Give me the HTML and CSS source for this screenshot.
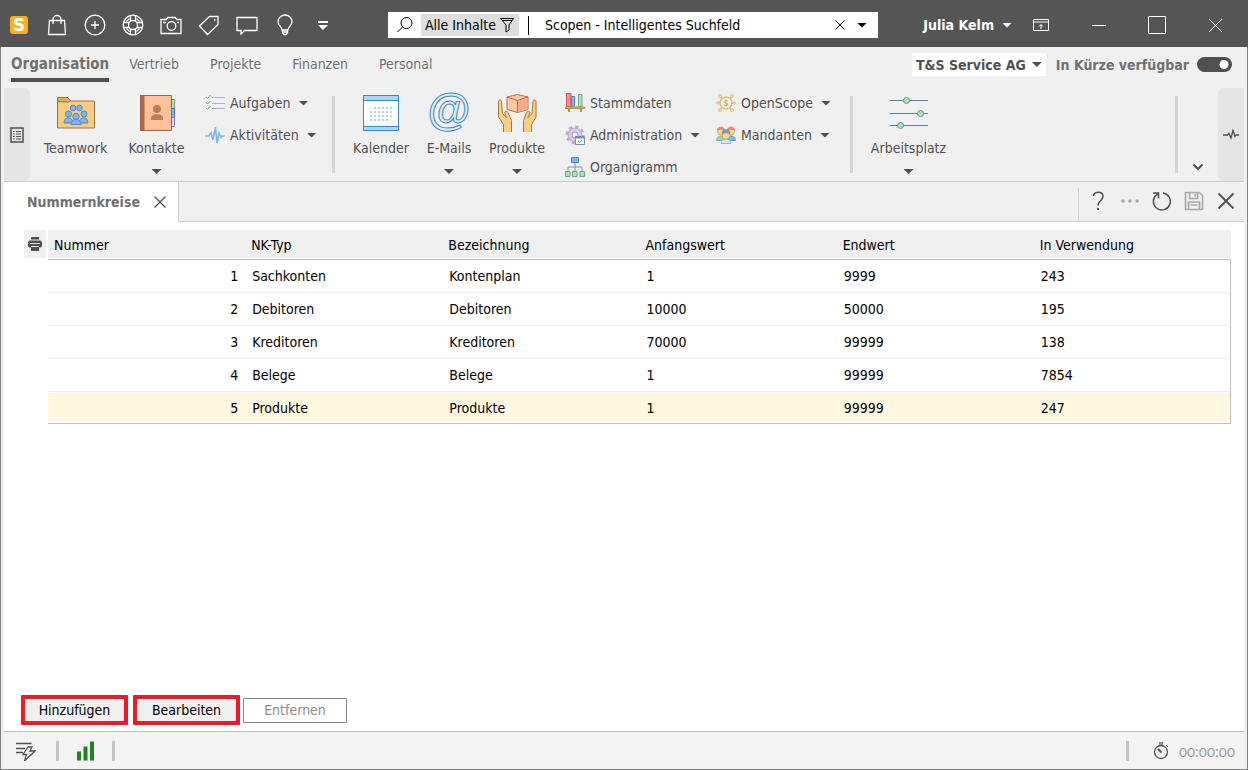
FILE: index.html
```html
<!DOCTYPE html>
<html lang="de">
<head>
<meta charset="utf-8">
<title>Nummernkreise</title>
<link rel="stylesheet" href="styles.css">
</head>
<body>
<div class="window">
  <header class="titlebar">
    <div class="quick">
      <button class="quick-btn" aria-label="Start"><span class="logo">S</span></button>
      <button class="quick-btn" aria-label="Shop"><svg class="i24" viewBox="0 0 24 24"><path d="M4.500 7.500h15l1 14h-17zM8 11V6.500a4 4 0 0 1 8 0V11"/></svg></button>
      <button class="quick-btn" aria-label="Neu"><svg class="i24" viewBox="0 0 24 24"><circle cx="12" cy="12" r="9.800"/><path d="M12 8v8M8 12h8"/></svg></button>
      <button class="quick-btn" aria-label="Hilfe"><svg class="i24" viewBox="0 0 24 24"><circle cx="12" cy="12" r="9.800"/><circle cx="12" cy="12" r="4.500"/><path d="M9.500 2.500v5.500M14.500 2.500v5.500M9.500 16v5.500M14.500 16v5.500M2.500 9.500H8M2.500 14.500H8M16 9.500h5.500M16 14.500h5.500"/><path d="M5.500 8.500l3-3M15.500 5.500l3 3M5.500 15.500l3 3M15.500 18.500l3-3"/></svg></button>
      <button class="quick-btn" aria-label="Kamera"><svg class="i24" viewBox="0 0 24 24"><path d="M2 6.500h5l2-2h7l2 2h4v14H2z"/><circle cx="12.500" cy="13" r="4.300"/><path d="M4 9.500h3M18 9.500h2"/></svg></button>
      <button class="quick-btn" aria-label="Etikett"><svg class="i24" viewBox="0 0 24 24"><path d="M12.500 3.500H21v8l-10.500 10L2.500 13z"/><path d="M17 7h1.500"/></svg></button>
      <button class="quick-btn" aria-label="Nachricht"><svg class="i24" viewBox="0 0 24 24"><path d="M2 4.500h20v13H9.500L6 21v-3.500H2z"/></svg></button>
      <button class="quick-btn" aria-label="Idee"><svg class="i24" viewBox="0 0 24 24"><path d="M9 17c0-3-4-4.500-4-8.500a7 6.500 0 0 1 14 0c0 4-4 5.500-4 8.500zM9 19h6M9.500 17v3l1.500 1.500h2l1.500-1.500v-3"/></svg></button>
      <button class="quick-btn" aria-label="Mehr"><svg class="i24" viewBox="0 0 24 24"><path d="M7 9h10" stroke-width="2"/><path class="solid" d="M7 12h10l-5 5z"/></svg></button>
    </div>
    <div class="search" role="search">
      <svg class="search-icon" viewBox="0 0 18 18"><circle cx="10.500" cy="7" r="5.500"/><path d="M6.500 11L1.500 16"/></svg>
      <button class="filter">Alle Inhalte<svg viewBox="0 0 16 16"><path d="M1.500 1.500h13L10 8v5l-3 2V8z"/><path d="M3 3.500h10"/></svg></button>
      <span class="search-rule"></span>
      <input class="search-input" type="text" aria-label="Suche" value="Scopen - Intelligentes Suchfeld">
      <button class="clear" aria-label="Leeren"><svg viewBox="0 0 12 12"><path d="M1.500 1.500l9 9M10.500 1.500l-9 9"/></svg></button>
      <button class="clear" aria-label="Verlauf"><span class="caret caret-black"></span></button>
    </div>
    <div class="account">
      <button class="user">Julia Kelm<span class="caret caret-white"></span></button>
      <button class="pin" aria-label="Menüband"><svg viewBox="0 0 16 12"><path d="M.500.500h15v11H.500zM.500 3h15M8 10V6M6 7.500l2-2 2 2"/></svg></button>
      <button class="win-btn" aria-label="Minimieren"><svg viewBox="0 0 20 20"><path d="M3 10.500h14"/></svg></button>
      <button class="win-btn" aria-label="Maximieren"><svg viewBox="0 0 20 20"><path d="M1.500 1.500h17v17h-17z"/></svg></button>
      <button class="win-btn" aria-label="Schließen"><svg viewBox="0 0 20 20"><path d="M4 4l13 13M17 4L4 17"/></svg></button>
    </div>
  </header>

  <div class="frame">
    <nav class="menu">
      <a class="menu-link active" href="#">Organisation</a>
      <a class="menu-link" href="#">Vertrieb</a>
      <a class="menu-link" href="#">Projekte</a>
      <a class="menu-link" href="#">Finanzen</a>
      <a class="menu-link" href="#">Personal</a>
      <div class="company">
        <button class="company-select">T&amp;S Service AG<span class="caret"></span></button>
        <label class="soon" for="soon">In Kürze verfügbar</label>
        <input class="switch" id="soon" type="checkbox" role="switch" checked>
      </div>
    </nav>

    <div class="ribbon">
      <button class="handle handle-left" aria-label="Liste"><svg viewBox="0 0 16 18"><path d="M2 2h12v14H2z" stroke-width="1.500"/><path d="M4 5.500h1.500M7 5.500h5M4 8h1.500M7 8h5M4 10.500h1.500M7 10.500h5M4 13h1.500M7 13h5"/></svg></button>
      <div class="group group-first">
        <button class="big">
          <svg class="i40" viewBox="0 0 40 40"><path d="M1.500 9V4.500h10l3 3.500h24v27h-37z" fill="#f6cd7e" stroke="#97763f"/><path d="M1.500 8.500v-4h10l3 3-2 1.500z" fill="#d9ad60" stroke="#97763f"/><g fill="#82b4ee" stroke="#5587c2"><circle cx="17" cy="15" r="2.800"/><circle cx="23.500" cy="15" r="2.800"/><circle cx="12.500" cy="21" r="3"/><path d="M8 30c0-7 8.500-7 9 0z"/><circle cx="28" cy="21" r="3"/><path d="M23 30c.500-7 9-7 9 0z"/><circle cx="20" cy="23.500" r="3.200"/><path d="M15 31.500c0-7 10-7 10 0z"/></g></svg>
          <span>Teamwork</span>
        </button>
        <button class="big">
          <svg class="i40" viewBox="0 0 40 40"><g stroke-width="1"><path d="M34 6.500h3.500v9H34z" fill="#b5dfba" stroke="#5fa779"/><path d="M34 15.500h3.500v9H34z" fill="#82b4ee" stroke="#3d78c0"/><path d="M34 24.500h3.500v9H34z" fill="#e0d3ef" stroke="#927bb0"/></g><path d="M3.500 2.500h31v35h-31z" fill="#ffc19a" stroke="#a26345"/><path d="M3.500 2.500H7v35H3.500z" fill="#a96c4d" stroke="#a26345"/><g fill="#c07a55" stroke="none"><circle cx="20" cy="16" r="4"/><path d="M14 27v-2c0-5 12-5 12 0v2z"/></g></svg>
          <span>Kontakte</span><span class="caret"></span>
        </button>
        <div class="stack stack-a">
          <button class="small"><svg class="i20" viewBox="0 0 20 20"><path d="M7 4.500h13M7 10.500h13M7 15.500h13" stroke="#a7b3c6"/><path d="M1 4l1.500 1.500L5.500 2M1 9.500L2.500 11 5.500 8M1 15l1.500 1.500L5.500 13" stroke="#62a97a"/></svg>Aufgaben<span class="caret"></span></button>
          <button class="small"><svg class="i20" viewBox="0 0 20 20"><path d="M0 11h4l2-3 2 7 2.500-13 1.500 16 2-10 2 4.500 1-1.500h3" stroke="#82b7e5" stroke-width="1.600"/></svg>Aktivitäten<span class="caret"></span></button>
        </div>
      </div>
      <span class="rule"></span>
      <div class="group group-second">
        <button class="big mid">
          <svg class="i40" viewBox="0 0 40 40"><path d="M2.500 2.500h35v35h-35z" fill="#fff" stroke="#3d87c9"/><path d="M3 3h34v4H3zM3 34h34v3H3z" fill="#aad6fa" stroke="none"/><path d="M3 7.500h34M3 33.500h34M2.500 2.500h35v35h-35z" stroke="#3d87c9"/><path d="M13 15h18" stroke="#aad6fa" stroke-width="2" stroke-dasharray="2 2"/><path d="M9 19h22M9 23h22M9 27h18" stroke="#aad6fa" stroke-width="2" stroke-dasharray="2 2"/></svg>
          <span>Kalender</span>
        </button>
        <button class="big mid">
          <svg class="i40 at-icon" viewBox="0 0 40 40"><text class="at" x="20" y="32" text-anchor="middle">@</text></svg>
          <span>E-Mails</span><span class="caret"></span>
        </button>
        <button class="big mid">
          <svg class="i40" viewBox="0 0 40 40"><path d="M10 4l10.500-2.500L31 4v12.500l-10.500 3-10.500-3z" fill="#ffc8a4" stroke="#ad7151"/><path d="M10 4l10.500 3.500L31 4M20.500 7.500v12" stroke="#ad7151"/><path d="M21 8l9.500-3v11.500L21 19z" fill="#f6ad85" stroke="none"/><g fill="#f7cf80" stroke="#9b7c45"><path d="M6.500 39v-7.500L1.500 24V8.500c0-2 3-2 3 0l1 12 4 4-2-5c1-2 3-1 3.500 0l3.500 8V39"/><path d="M34.500 39v-7.500l4.500-7.500V8.500c0-2-3-2-3 0l-1 12-4 4 2-5c-1-2-3-1-3.500 0l-3 8V39"/></g></svg>
          <span>Produkte</span><span class="caret"></span>
        </button>
        <div class="stack stack-b">
          <button class="small"><svg class="i20" viewBox="0 0 20 20"><path d="M1.500.500h4.500v13H1.500z" fill="#f28b8b" stroke="#d45a5f"/><path d="M6.500 3.500h3v10h-3z" fill="#82b4ee" stroke="#4b82c4"/><path d="M13.500 1.500H17v12h-3.500z" fill="#b5dfba" stroke="#65ab80"/><path d="M.500 14h19v1.500H.500z" fill="#f0c070" stroke="#c28c43"/><path d="M4 16v3M16 16v3" stroke="#c28c43" stroke-width="2"/></svg>Stammdaten</button>
          <button class="small"><svg class="i20" viewBox="0 0 20 20"><circle cx="10" cy="10" r="8" stroke="#b9acd6" stroke-width="3" stroke-dasharray="3.200 3.083"/><circle cx="10" cy="10" r="7" fill="#d5ccea" stroke="#b3a5d1"/><circle cx="10" cy="10" r="3" fill="#f0f0f0" stroke="#aa9ac9"/><path d="M10.500 11.500h9v8h-9z" fill="#fff" stroke="#7692aa"/><path d="M11 12.500h8" stroke="#7692aa" stroke-width="2"/><path d="M13 16l1.500 1.500L17 15" stroke="#4d9d70"/></svg>Administration<span class="caret"></span></button>
          <button class="small"><svg class="i20" viewBox="0 0 20 20"><path d="M3 14v-4h14v4M10 6v8" stroke="#8993a5"/><path d="M6.500.500h7v5h-7z" fill="#82b4ee" stroke="#4f86cb"/><path d="M.500 14.500H5v5H.500zM7.500 14.500H12v5H7.500zM15 14.500h4.500v5H15z" fill="#b5dfba" stroke="#65ab80"/></svg>Organigramm</button>
        </div>
        <div class="stack stack-c">
          <button class="small"><svg class="i20" viewBox="0 0 20 20"><g fill="#f0f0f0" stroke="#d6c17b"><path d="M10 10L4 3M10 10l6-7M10 10L4 17M10 10l6 7M1 10h18"/><circle cx="10" cy="10" r="6" stroke-width="1.500"/><g fill="#f5e6ae"><circle cx="4" cy="3" r="1.500"/><circle cx="16" cy="3" r="1.500"/><circle cx="4" cy="17" r="1.500"/><circle cx="16" cy="17" r="1.500"/><circle cx="1.800" cy="10" r="1.200"/><circle cx="18.200" cy="10" r="1.200"/></g></g><text class="coin" x="10" y="13" text-anchor="middle">S</text></svg>OpenScope<span class="caret"></span></button>
          <button class="small"><svg class="i20" viewBox="0 0 20 20"><g stroke-width=".7"><path d="M.500 15.500c0-6 9-6 9 0z" fill="#9fd6aa" stroke="#5fa779"/><path d="M10.500 15.500c0-6 9-6 9 0z" fill="#82b4ee" stroke="#4b82c4"/><circle cx="5" cy="6.500" r="3.500" fill="#f8d98c" stroke="#bb984f"/><path d="M1.500 5c0-4 7-4 7 0-2-1-5-1-7 0z" fill="#ee9078" stroke="#d9745f"/><circle cx="15" cy="6.500" r="3.500" fill="#f8d98c" stroke="#bb984f"/><path d="M11.500 5c0-4 7-4 7 0-2-1-5-1-7 0z" fill="#ee9078" stroke="#d9745f"/><path d="M5 18.500c0-6 10-6 10 0z" fill="#d3e8ff" stroke="#6ba7df"/><circle cx="10" cy="10.500" r="3.800" fill="#f8d98c" stroke="#bb984f"/><path d="M6 8.500c0-5 8-5 8 0-2-1-6-1-8 0z" fill="#8697ad" stroke="#74869e"/></g></svg>Mandanten<span class="caret"></span></button>
        </div>
      </div>
      <span class="rule"></span>
      <div class="group group-third">
        <button class="big">
          <svg class="i40" viewBox="0 0 40 40"><path d="M1 7.500h38M1 20.500h38M1 32.500h38" stroke="#65799b"/><g fill="#b3dfb8" stroke="#5b9f77"><circle cx="17.500" cy="7.500" r="3"/><circle cx="31.500" cy="20.500" r="3"/><circle cx="11.500" cy="32.500" r="3"/></g></svg>
          <span>Arbeitsplatz</span><span class="caret"></span>
        </button>
      </div>
      <span class="rule rule-last"></span>
      <button class="expand" aria-label="Mehr anzeigen"><svg viewBox="0 0 12 8"><path d="M1.500 1.500L6 6l4.500-4.500" stroke-width="2"/></svg></button>
      <button class="handle handle-right" aria-label="Aktivität"><svg viewBox="0 0 16 18"><path d="M0 9h4.500l1.500-1.500 2 4.500 2-7.500 2 6 1-1.500h3" stroke-width="1.300"/></svg></button>
    </div>

    <div class="tabbar">
      <div class="tab"><span>Nummernkreise</span><button class="tab-close" aria-label="Tab schließen"><svg viewBox="0 0 12 12"><path d="M.500.500l11 11M11.500.500l-11 11" stroke-width="1.300"/></svg></button></div>
      <div class="tools">
        <button class="tool" aria-label="Hilfe"><svg viewBox="0 0 20 20"><path d="M5.500 5C5.500 0 15 0 15 5.500c0 4-5 4-5 9" stroke-width="1.500"/><path d="M9 17h2v2H9z" fill="#505050" stroke="none"/></svg></button>
        <button class="tool muted" aria-label="Weitere"><svg viewBox="0 0 20 20"><g fill="#a8a8a8" stroke="none"><circle cx="3" cy="10" r="1.800"/><circle cx="10" cy="10" r="1.800"/><circle cx="17" cy="10" r="1.800"/></g></svg></button>
        <button class="tool" aria-label="Aktualisieren"><svg viewBox="0 0 20 20"><path d="M11 2a8.500 8.500 0 1 1-6.500 1.800L6.500 2M1 2h5.500v5.500" stroke-width="1.500"/></svg></button>
        <button class="tool muted" aria-label="Speichern"><svg viewBox="0 0 20 20"><path d="M1.500 1.500h14l3 3v14h-17zM5.500 1.500v6h8v-6M11 3v2.500M4.500 18v-7h11v7M6.500 14h7" stroke-width="1.600"/></svg></button>
        <button class="tool" aria-label="Schließen"><svg viewBox="0 0 20 20"><path d="M2.500 2.500l15 15M17.500 2.500l-15 15" stroke-width="1.800"/></svg></button>
      </div>
    </div>

    <main class="content">
      <div class="grid">
        <button class="print" aria-label="Drucken"><svg viewBox="0 0 16 16"><path d="M4 1h8v2.500H4zM2.500 4.500h11L15 6v4.500l-1.500 1H12V10H4v1.500H2.500L1 10.500V6zM4 11h8v4H4z" fill="#505050" stroke="none"/><path d="M3 7.500h10" stroke="#ddd"/></svg></button>
        <table class="data">
          <thead><tr><th>Nummer</th><th>NK-Typ</th><th>Bezeichnung</th><th>Anfangswert</th><th>Endwert</th><th>In Verwendung</th></tr></thead>
          <tbody>
            <tr><td>1</td><td>Sachkonten</td><td>Kontenplan</td><td>1</td><td>9999</td><td>243</td></tr>
            <tr><td>2</td><td>Debitoren</td><td>Debitoren</td><td>10000</td><td>50000</td><td>195</td></tr>
            <tr><td>3</td><td>Kreditoren</td><td>Kreditoren</td><td>70000</td><td>99999</td><td>138</td></tr>
            <tr><td>4</td><td>Belege</td><td>Belege</td><td>1</td><td>99999</td><td>7854</td></tr>
            <tr class="selected"><td>5</td><td>Produkte</td><td>Produkte</td><td>1</td><td>99999</td><td>247</td></tr>
          </tbody>
        </table>
      </div>
      <div class="actions">
        <button class="action marked">Hinzufügen</button>
        <button class="action marked">Bearbeiten</button>
        <button class="action plain" disabled>Entfernen</button>
      </div>
    </main>

    <footer class="status">
      <svg class="i20" viewBox="0 0 20 20"><path d="M0 2.500h15.500M0 7.500h9M0 11.500h7" stroke="#505050" stroke-width="1.500"/><path d="M12 6h4l-2 4h5L8.500 20l2-6.500H7z" fill="#f3f3f3" stroke="#505050" stroke-width="1.300"/></svg>
      <span class="status-rule"></span>
      <svg class="i20" viewBox="0 0 20 20"><path d="M3 10.500v9M9.500 5.500v14M16 .500v19" stroke="#218021" stroke-width="4"/></svg>
      <span class="status-rule"></span>
      <div class="timer">
        <span class="status-rule"></span>
        <svg class="i20" viewBox="0 0 20 20"><circle cx="10" cy="11" r="6.500" stroke="#505050" stroke-width="1.300"/><path d="M7 8l3.500 3.500" stroke="#505050" stroke-width="2"/><path d="M8 2.500h4" stroke="#909090" stroke-width="3"/><path d="M15 4l2 2" stroke="#505050"/></svg>
        <time>00:00:00</time>
      </div>
    </footer>
  </div>
</div>
</body>
</html>
```
FILE: styles.css
```css
* { box-sizing: border-box; }

body {
  margin: 0;
  font: 14px/20px "DejaVu Sans Condensed", "Noto Sans", sans-serif;
  color: #000;
}

button {
  display: flex;
  align-items: center;
  justify-content: center;
  margin: 0;
  padding: 0;
  border: 0;
  background: none;
  font: inherit;
  color: inherit;
  white-space: nowrap;
}

svg { display: block; flex: none; fill: none; stroke: currentColor; }
.i20 { width: 20px; height: 20px; }
.i24 { width: 24px; height: 24px; stroke-width: 1.3; }
.i40 { width: 40px; height: 40px; }
.solid { fill: currentColor; stroke: none; }

.caret {
  flex: none;
  width: 10px;
  height: 5px;
  background: #505050;
  clip-path: polygon(0 0, 100% 0, 50% 100%);
}
.caret-black { background: #000; }
.caret-white { background: #fff; }

.window { display: flex; flex-direction: column; min-height: 100vh; }

.titlebar {
  display: flex;
  align-items: center;
  height: 47px;
  padding: 3px 4px 0 0;
  background: #555;
  color: #fff;
}
.quick { display: flex; }
.quick-btn { width: 38px; height: 38px; }
.logo {
  width: 18px;
  height: 18px;
  border-radius: 3px;
  background: #fbb11b;
  font: bold 17px/18px "DejaVu Sans", sans-serif;
}

.search {
  display: flex;
  align-items: center;
  flex: 0 1 490px;
  height: 26px;
  margin-left: 46px;
  padding: 0 5px 0 8px;
  background: #fff;
  color: #000;
}
.search-icon { width: 18px; height: 18px; }
.filter {
  gap: 3px;
  height: 22px;
  margin-left: 7px;
  padding: 0 4px;
  background: #dedede;
}
.filter svg { width: 16px; height: 16px; }
.search-rule { width: 1px; height: 19px; margin: 0 16px 0 9px; background: #000; }
.search-input {
  flex: 1;
  min-width: 0;
  padding: 0;
  border: 0;
  outline: 0;
  background: none;
  font: inherit;
}
.clear { width: 22px; height: 22px; }
.clear svg { width: 12px; height: 12px; }

.account { display: flex; align-items: center; margin-left: auto; }
.user { gap: 8px; font-weight: bold; }
.pin { width: 58px; height: 38px; }
.pin svg { width: 16px; height: 12px; }
.win-btn { width: 58px; height: 38px; }
.win-btn svg { width: 20px; height: 20px; }

.frame {
  display: flex;
  flex: 1;
  flex-direction: column;
  padding: 0 3px;
  border: solid #808080;
  border-width: 0 1px 1px;
  background: #f0f0f0;
  color: #505050;
}

.menu { display: flex; padding: 6px 12px 0 7px; height: 37px; }
.menu-link {
  height: 29px;
  margin-right: 31px;
  color: #707070;
  line-height: 22px;
  text-decoration: none;
}
.menu-link.active {
  margin-right: 20px;
  border-bottom: 4px solid #505050;
  font-size: 15px;
  font-weight: bold;
}
.company { display: flex; align-items: center; height: 23px; margin-left: auto; font-weight: bold; }
.company-select { gap: 6px; height: 23px; padding: 0 4px; background: #fff; }
.soon { margin: 0 8px 0 10px; color: #707070; }
.switch {
  appearance: none;
  width: 35px;
  height: 15px;
  margin: 0;
  border-radius: 8px;
  background: radial-gradient(circle at 27px 50%, #fff 4px, #505050 5px);
}

.ribbon { display: flex; height: 98px; padding-top: 4px; border-bottom: 1px solid #ccc; }
.handle { width: 26px; background: #e4e4e4; }
.handle svg { width: 16px; height: 18px; }
.handle-left { border-radius: 0 6px 6px 0; }
.handle-right { border-radius: 6px 0 0 6px; }
.group { display: flex; }
.group-first { padding-left: 5px; }
.group-second { padding-left: 12px; }
.group-third { padding-left: 15px; }
.big {
  flex-direction: column;
  justify-content: flex-start;
  width: 81px;
  padding-top: 5px;
}
.big.mid { width: 68px; }
.big span:not(.caret) { margin-top: 5px; }
.big .caret { margin-top: 11px; }
.stack { display: flex; flex-direction: column; padding-top: 5px; gap: 12px; }
.stack-a { width: 135px; padding-left: 8px; }
.stack-b { width: 165px; padding-left: 14px; }
.stack-c { width: 134px; }
.small { align-self: flex-start; height: 20px; }
.small svg { margin-right: 5px; }
.small .caret { margin-left: 8px; }
.rule { flex: none; width: 3px; height: 77px; margin-top: 8px; background: #d5d5d5; }
.rule-last { margin-left: auto; }
.expand { align-self: flex-end; width: 40px; height: 28px; }
.expand svg { width: 12px; height: 8px; }

.tabbar { display: flex; height: 40px; }
.tabbar::after { content: ""; order: 1; flex: 1; border-bottom: 1px solid #ccc; }
.tab {
  display: flex;
  align-items: center;
  gap: 14px;
  padding: 0 12px 0 23px;
  border-right: 1px solid #ccc;
  background: #fff;
  color: #707070;
  font-weight: bold;
}
.tab-close { color: #505050; }
.tab-close svg { width: 12px; height: 12px; }
.tools {
  display: flex;
  order: 2;
  padding: 6px 2px 0 4px;
  border-bottom: 1px solid #ccc;
  background: linear-gradient(#ccc, #ccc) 0 6px / 1px 100% no-repeat;
}
.tool { width: 32px; height: 26px; }
.tool svg { width: 20px; height: 20px; }
.muted { color: #a8a8a8; }

.content {
  display: flex;
  flex: 1;
  flex-direction: column;
  justify-content: space-between;
  padding: 8px 13px 6px 17px;
  background: #fff;
  color: #000;
}
.grid { display: flex; align-items: flex-start; gap: 2px; padding-left: 3px; }
.print { width: 22px; height: 28px; background: #efefef; }
.print svg { width: 16px; height: 16px; }
.data { flex: 1; border-collapse: separate; border-spacing: 0; table-layout: fixed; width: 100%; }
.data th {
  height: 30px;
  padding: 0 6px;
  border-bottom: 1px solid #c0c0c0;
  background: #efefef;
  box-shadow: inset 0 -1px #fff;
  font-weight: normal;
  text-align: left;
}
.data td { height: 33px; padding: 0 7px; border-bottom: 1px solid #ececec; }
.data td:first-child { text-align: right; }
.data td:last-child { border-right: 1px solid #c0c0c0; }
.data .selected td {
  height: 32px;
  border-bottom-color: #c0c0c0;
  background: #fff8e1;
  box-shadow: inset 0 1px #fff, inset 0 -2px #fff;
}

.actions { display: flex; align-items: center; gap: 5px; }
.action { width: 107px; height: 30px; border: 4px solid #ed1c24; border-radius: 1px; background: #f0f0f0; }
.action.plain {
  width: 104px;
  height: 25px;
  margin-left: -2px;
  border: 1px solid #848484;
  background: #fff;
  color: #8c8c8c;
}

.status {
  display: flex;
  align-items: center;
  height: 38px;
  padding: 0 9px 0 12px;
  border-top: 1px solid #c0c0c0;
  background: #f3f3f3;
}
.status-rule { width: 3px; height: 20px; margin: 0 17px 0 20px; background: #c4c4c4; }
.status-rule:nth-of-type(2) { margin-left: 16px; }
.timer { display: flex; align-items: center; margin-left: auto; color: #a0a0a0; }
.timer .i20 { margin: 0 8px 0 5px; }
.timer time { font: 15px/20px Lato, "Noto Sans", sans-serif; font-variant-numeric: oldstyle-nums; }

.at-icon { overflow: visible; }
.at { fill: #dcedfc; stroke: #3d87c9; stroke-width: 1; font: bold 44px "Liberation Sans", sans-serif; font-weight: bold; }
.coin { fill: #c4a94f; stroke: none; font: bold 8px "Noto Sans", sans-serif; }
```
